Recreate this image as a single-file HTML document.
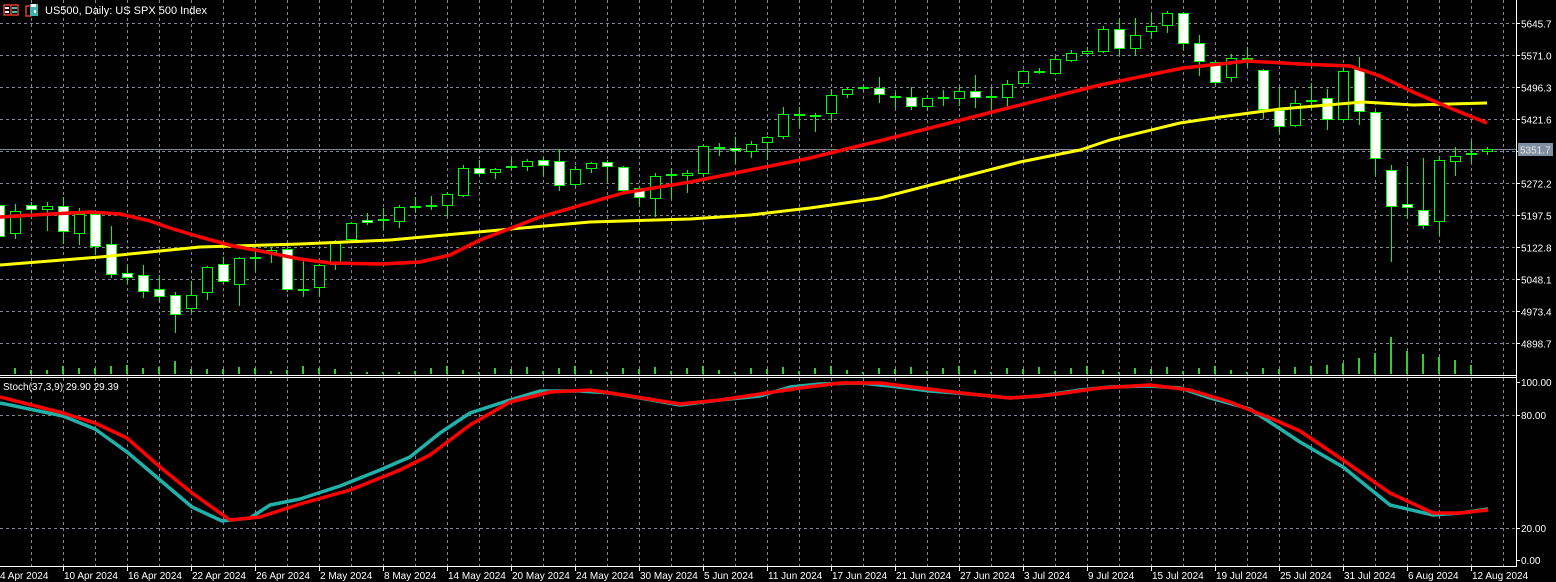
<!DOCTYPE html>
<html><head><meta charset="utf-8">
<style>
html,body{margin:0;padding:0;background:#000;width:1556px;height:582px;overflow:hidden}
svg{display:block}
text{font-family:"Liberation Sans",sans-serif;font-size:10px;fill:#fff}
</style></head><body>
<svg id="s" width="1556" height="582" viewBox="0 0 1556 582" xmlns="http://www.w3.org/2000/svg">
<rect width="1556" height="582" fill="#000"/>
<g id="grid" stroke="#7f8794" stroke-width="1" stroke-dasharray="3,3" fill="none"></g>
<g id="vol"></g>
<line x1="0" y1="149.5" x2="1516" y2="149.5" stroke="#7f8794" stroke-width="1"/>
<g id="cand"></g>
<polyline id="yel" fill="none" stroke="#ffff00" stroke-width="3" stroke-linejoin="round"/>
<polyline id="red" fill="none" stroke="#ff0000" stroke-width="3.5" stroke-linejoin="round"/>
<polyline id="st1" fill="none" stroke="#20b2aa" stroke-width="3.5" stroke-linejoin="round"/>
<polyline id="st2" fill="none" stroke="#ff0000" stroke-width="3.5" stroke-linejoin="round"/>
<!-- panel borders -->
<line x1="0" y1="375.5" x2="1516" y2="375.5" stroke="#fff"/>
<line x1="0" y1="377.5" x2="1516" y2="377.5" stroke="#fff"/>
<line x1="0" y1="566.5" x2="1516" y2="566.5" stroke="#fff"/>
<line x1="1516.5" y1="0" x2="1516.5" y2="567" stroke="#fff"/>
<g id="axis"></g>
<!-- header icons -->
<rect x="4" y="5" width="14" height="10" fill="none" stroke="#e03a2a" stroke-width="1.5"/>
<line x1="11" y1="5" x2="11" y2="15" stroke="#e03a2a" stroke-width="1.5"/>
<rect x="12" y="7" width="5" height="2" fill="#40c0c0"/><rect x="12" y="11" width="5" height="2" fill="#40c0c0"/>
<rect x="5" y="7" width="4" height="2" fill="#fff"/><rect x="5" y="11" width="4" height="2" fill="#fff"/>
<rect x="26" y="6" width="5" height="10" fill="none" stroke="#e03a2a" stroke-width="1.5"/>
<rect x="30" y="4" width="8" height="12" fill="#40b0b0"/>
<rect x="31" y="4" width="5" height="3" fill="#fff"/><rect x="34" y="10" width="2" height="3" fill="#fff"/>
<text x="45" y="14" style="font-size:11px">US500, Daily:  US SPX 500 Index</text>
<text x="3" y="390">Stoch(37,3,9) 29.90 29.39</text>
<rect x="1518" y="143" width="35" height="13" fill="#8090a0"/>
<text x="1520" y="153.5" style="fill:#e8e8e8">5351.7</text>
</svg>
<script>
var NS="http://www.w3.org/2000/svg";
function el(p,t,a){var e=document.createElementNS(NS,t);for(var k in a)e.setAttribute(k,a[k]);p.appendChild(e);return e;}
var g=document.getElementById('grid');
for(var x=31.5;x<1516;x+=32){el(g,'line',{x1:x,y1:0,x2:x,y2:375});el(g,'line',{x1:x,y1:378,x2:x,y2:566});}
for(var k=0;k<11;k++){var y=Math.round(23.3+32*k)+0.5;el(g,'line',{x1:0,y1:y,x2:1516,y2:y});}
el(g,'line',{x1:0,y1:415.5,x2:1516,y2:415.5});el(g,'line',{x1:0,y1:528.5,x2:1516,y2:528.5});
// candles: [top,bottom,high,low,type]
var C=[[205,237,200,240,'w'],[211,234,204,239,'h'],[205,210,202,219,'w'],[206,210,202,231,'h'],[206,232,197,244,'w'],[214,234,208,245,'h'],[214,247,212,255,'w'],[244,275,226,278,'w'],[273,278,265,284,'w'],[275,292,265,298,'w'],[289,297,275,302,'w'],[295,315,292,333,'w'],[295,309,281,313,'h'],[267,293,266,300,'h'],[264,282,257,284,'w'],[258,285,257,306,'h'],[258,258,247,271,'d'],[250,253,247,263,'h'],[249,290,248,292,'w'],[290,290,258,297,'d'],[265,288,264,297,'h'],[243,265,240,270,'h'],[223,240,222,243,'h'],[220,223,213,225,'w'],[220,220,208,230,'d'],[207,222,205,228,'h'],[207,207,197,212,'d'],[206,206,196,210,'d'],[194,206,192,217,'h'],[168,196,165,197,'h'],[168,174,160,176,'w'],[169,173,168,179,'h'],[167,167,159,170,'d'],[161,167,159,171,'h'],[160,166,157,177,'w'],[161,186,149,191,'w'],[169,185,166,186,'h'],[163,169,162,173,'h'],[162,167,160,182,'w'],[167,191,166,192,'w'],[188,198,186,205,'w'],[176,199,173,217,'h'],[175,175,168,199,'d'],[173,176,170,193,'h'],[146,174,145,176,'h'],[148,148,143,156,'d'],[148,151,137,164,'w'],[144,152,141,158,'h'],[137,143,136,160,'h'],[114,137,107,139,'h'],[115,115,107,127,'d'],[116,116,113,132,'d'],[95,114,89,120,'h'],[89,95,88,98,'h'],[88,88,86,91,'d'],[88,95,77,103,'w'],[96,98,93,108,'w'],[97,107,87,110,'w'],[98,107,95,110,'h'],[98,98,90,106,'d'],[91,99,87,106,'h'],[91,98,75,108,'w'],[97,97,88,110,'d'],[84,98,80,110,'h'],[71,84,70,86,'h'],[72,72,68,74,'d'],[59,74,56,75,'h'],[53,61,50,62,'h'],[51,54,47,55,'h'],[29,52,26,53,'h'],[29,49,18,55,'w'],[35,49,18,55,'h'],[26,32,13,38,'h'],[13,26,11,33,'h'],[13,44,12,50,'w'],[43,62,35,76,'w'],[62,83,60,85,'w'],[58,78,54,82,'h'],[58,60,47,67,'w'],[70,110,69,119,'w'],[110,127,88,133,'w'],[103,126,90,127,'h'],[101,101,83,110,'d'],[98,120,89,130,'w'],[71,120,67,121,'h'],[69,112,57,125,'w'],[112,159,111,175,'w'],[170,207,165,262,'w'],[204,208,166,218,'w'],[210,226,158,229,'w'],[160,222,156,235,'h'],[156,162,147,176,'h'],[154,154,141,163,'d'],[149,152,147,155,'h']];
var cg=document.getElementById('cand'),vg=document.getElementById('vol');
var VT=[368,368,370,370,366,368,368,366,365,368,367,361,369,369,369,367,368,371,370,366,368,369,372,372,372,372];
for(var i=0;i<C.length;i++){var c=C[i],cx=-1+16*i+0.5;
 el(cg,'line',{x1:cx,y1:c[2],x2:cx,y2:c[3],stroke:'#00ff00','stroke-width':1});
 if(c[4]=='d'){el(cg,'rect',{x:cx-5.5,y:c[0]-1,width:11,height:2,fill:'#00ff00'});}
 else{el(cg,'rect',{x:cx-5,y:c[0]+0.5,width:10,height:Math.max(c[1]-c[0]-1,1),fill:c[4]=='w'?'#fff':'#000',stroke:'#00ff00','stroke-width':1});}
}
var VL={82:366,83:365,84:363,85:358,86:353,87:337,88:351,89:354,90:357,91:360,92:365};
for(var i=0;i<93;i++){var t=VL[i]||(i<VT.length?VT[i]:[369,367,371,368,366,370,372,368][i%8]);
 el(vg,'rect',{x:-1+16*i-1,y:t,width:2,height:374-t,fill:'#32cd32'});}
function pl(id,pts){document.getElementById(id).setAttribute('points',pts.map(function(p){return p.join(',')}).join(' '));}
pl('red',[[0,217],[50,214],[90,212],[120,214],[150,221],[170,228],[200,237],[233,246],[260,251],[300,259],[330,263],[380,264],[420,262],[450,255],[480,240],[540,217],[623,193],[690,182],[760,168],[810,158],[887,139],[1000,110],[1100,85],[1183,68],[1247,61],[1300,64],[1350,66],[1380,76],[1413,92],[1450,108],[1487,123]]);
pl('yel',[[0,265],[100,257],[200,247],[300,244],[390,240],[500,230],[590,222],[690,219],[750,215],[810,208],[880,198],[950,180],[1020,162],[1080,150],[1110,140],[1180,123],[1220,117],[1280,109],[1363,102],[1413,105],[1487,103]]);
pl('st1',[[0,403],[63,416],[95,429],[127,452],[160,480],[192,507],[222,521],[250,518],[270,505],[300,499],[340,486],[380,470],[410,457],[440,433],[470,413],[510,400],[540,391],[580,391],[610,393],[640,398],[680,405],[720,400],[760,396],[790,387],[820,384],[860,383],[890,386],[930,391],[970,394],[1010,398],[1040,396],[1080,390],[1110,387],[1150,386],[1180,388],[1210,398],[1250,409],[1300,442],[1343,467],[1390,505],[1433,515],[1460,513],[1488,509]]);
pl('st2',[[0,397],[63,413],[95,423],[127,438],[160,467],[192,493],[230,520],[260,517],[300,504],[350,490],[400,470],[430,455],[470,425],[510,402],[550,392],[590,390],[630,396],[680,404],[720,400],[760,394],[800,388],[840,383],[880,383],[920,388],[970,394],[1010,398],[1050,395],[1100,388],[1150,385],[1190,390],[1230,402],[1270,418],[1300,431],[1343,460],[1390,493],[1433,513],[1460,513],[1488,510]]);
var ax=document.getElementById('axis');
var P=['5645.7','5571.0','5496.3','5421.6','','5272.2','5197.5','5122.8','5048.1','4973.4','4898.7'];
for(var k=0;k<11;k++){var y=Math.round(23.3+32*k)+0.5;el(ax,'line',{x1:1516,y1:y,x2:1520,y2:y,stroke:'#fff'});if(P[k]){var t=el(ax,'text',{x:1521,y:y+4});t.textContent=P[k];}}
[['100.00',382],['80.00',415],['20.00',528],['0.00',560]].forEach(function(a){el(ax,'line',{x1:1516,y1:a[1]+0.5,x2:1520,y2:a[1]+0.5,stroke:'#fff'});var t=el(ax,'text',{x:1521,y:a[1]+4});t.textContent=a[0];});
var D=['4 Apr 2024','10 Apr 2024','16 Apr 2024','22 Apr 2024','26 Apr 2024','2 May 2024','8 May 2024','14 May 2024','20 May 2024','24 May 2024','30 May 2024','5 Jun 2024','11 Jun 2024','17 Jun 2024','21 Jun 2024','27 Jun 2024','3 Jul 2024','9 Jul 2024','15 Jul 2024','19 Jul 2024','25 Jul 2024','31 Jul 2024','6 Aug 2024','12 Aug 2024'];
for(var k=0;k<D.length;k++){var x=-1+64*k;el(ax,'line',{x1:x+0.5,y1:567,x2:x+0.5,y2:571,stroke:'#fff'});var t=el(ax,'text',{x:x+1,y:579});t.textContent=D[k];}
</script>
</body></html>
